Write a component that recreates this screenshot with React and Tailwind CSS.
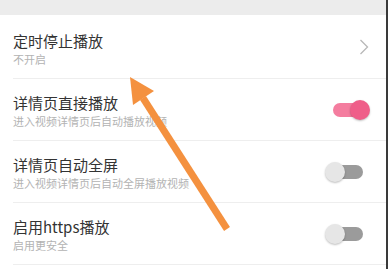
import React, { useState } from 'react';

const ROWS = [
  { id: 'timer', title: '定时停止播放', desc: '不开启', kind: 'link' },
  { id: 'autoplay', title: '详情页直接播放', desc: '进入视频详情页后自动播放视频', kind: 'switch', on: true },
  { id: 'fullscreen', title: '详情页自动全屏', desc: '进入视频详情页后自动全屏播放视频', kind: 'switch', on: false },
  { id: 'https', title: '启用https播放', desc: '启用更安全', kind: 'switch', on: false },
];

const Toggle = ({ on, onClick }) => (
  <button type="button" onClick={onClick} className="relative w-[46px] h-[22px] flex items-center justify-center">
    <span className={`w-[30px] h-[14px] rounded-full ${on ? 'bg-[#f47d9f]' : 'bg-[#9b9b9b]'}`} />
    <span
      className={`absolute top-[1px] w-[20px] h-[20px] rounded-full shadow-[0_1px_2px_rgba(0,0,0,0.25)] ${
        on ? 'left-[25px] bg-[#ef5e89]' : 'left-[0px] bg-[#e6e6e6]'
      }`}
    />
  </button>
);

const App = () => {
  const [values, setValues] = useState(() =>
    Object.fromEntries(ROWS.filter((r) => r.kind === 'switch').map((r) => [r.id, r.on]))
  );

  const toggle = (id) => setValues((prev) => ({ ...prev, [id]: !prev[id] }));

  return (
    <div
      className="relative w-[388px] h-[269px] overflow-hidden bg-white border-r-2 border-[#3a3a3a]"
      style={{ fontFamily: '"Noto Sans CJK SC", "Noto Sans", sans-serif' }}
    >
      <div className="h-[15px] bg-[#ececec]" />
      <div className="pt-[2px]">
        {ROWS.map((row) => (
          <div key={row.id} className="h-[62px] pl-[13px]">
            <div className="h-[61px] flex items-start justify-between pr-[16px]">
              <div className="pt-[14px]">
                <div className="text-[15px] leading-[20px] text-[#333333]">{row.title}</div>
                <div className="mt-[1px] text-[11px] leading-[14px] text-[#b3b3b3]">{row.desc}</div>
              </div>
              <div className="h-full flex items-center">
                {row.kind === 'link' ? (
                  <svg width="10" height="16" viewBox="0 0 10 16" className="mr-[1px] mb-[2px]">
                    <path d="M1.5 1 L8.5 8 L1.5 15" fill="none" stroke="#b8b8b8" strokeWidth="1.3" />
                  </svg>
                ) : (
                  <div className="mr-[-1px]">
                    <Toggle on={values[row.id]} onClick={() => toggle(row.id)} />
                  </div>
                )}
              </div>
            </div>
            <div className="h-px bg-[#eeeeee]" />
          </div>
        ))}
      </div>

      <svg className="absolute left-0 top-0 pointer-events-none" width="388" height="269" viewBox="0 0 388 269">
        <line x1="143" y1="98" x2="227" y2="229" stroke="#f4913f" strokeWidth="7" />
        <polygon points="130,77 154,91 133,105" fill="#f4913f" />
      </svg>
    </div>
  );
};

export default App;
